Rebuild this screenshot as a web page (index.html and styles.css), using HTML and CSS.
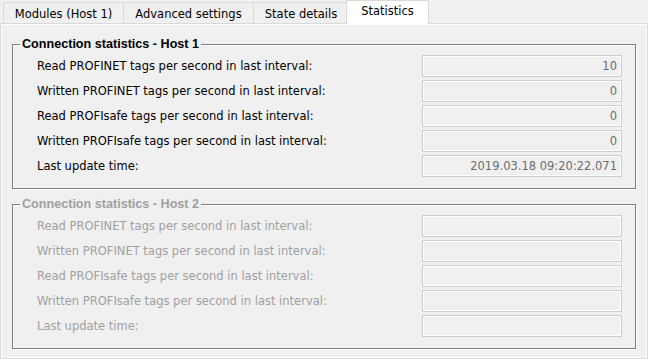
FILE: index.html
```html
<!DOCTYPE html>
<html>
<head>
<meta charset="utf-8">
<link rel="stylesheet" href="styles.css">
</head>
<body>
<div class="tabs">
  <div class="tab t1">Modules (Host 1)</div>
  <div class="tab t2">Advanced settings</div>
  <div class="tab t3">State details</div>
  <div class="tab active t4">Statistics</div>
</div>
<div class="panel">
  <div class="group">
    <span class="legend">Connection statistics - Host 1</span>
    <div class="rows">
      <div class="label">Read PROFINET tags per second in last interval:</div><div class="box">10</div>
      <div class="label">Written PROFINET tags per second in last interval:</div><div class="box">0</div>
      <div class="label">Read PROFIsafe tags per second in last interval:</div><div class="box">0</div>
      <div class="label">Written PROFIsafe tags per second in last interval:</div><div class="box">0</div>
      <div class="label">Last update time:</div><div class="box">2019.03.18 09:20:22.071</div>
    </div>
  </div>
  <div class="group disabled">
    <span class="legend">Connection statistics - Host 2</span>
    <div class="rows">
      <div class="label">Read PROFINET tags per second in last interval:</div><div class="box"></div>
      <div class="label">Written PROFINET tags per second in last interval:</div><div class="box"></div>
      <div class="label">Read PROFIsafe tags per second in last interval:</div><div class="box"></div>
      <div class="label">Written PROFIsafe tags per second in last interval:</div><div class="box"></div>
      <div class="label">Last update time:</div><div class="box"></div>
    </div>
  </div>
</div>
</body>
</html>
```
FILE: styles.css
```css
html, body {
  margin: 0;
  padding: 0;
  background: #f0f0f0;
  width: 648px;
  height: 359px;
  overflow: hidden;
  font-family: "DejaVu Sans", Verdana, sans-serif;
  font-size: 11.5px;
  color: #000;
}
.tabs {
  display: flex;
  height: 23px;
  padding-left: 3px;
  align-items: flex-end;
  position: relative;
  z-index: 2;
}
.tab {
  box-sizing: border-box;
  height: 21px;
  border: 1px solid #d9d9d9;
  border-bottom: none;
  margin-right: -1px;
  display: flex;
  align-items: center;
  justify-content: center;
  background: #f0f0f0;
  padding-top: 1px;
}
.t1 { width: 121px; }
.t2 { width: 131px; }
.t3 { width: 96px; }
.t4 { width: 81px; }
.tab.active {
  background: #fff;
  height: 24px;
  margin-left: -2px;
  margin-bottom: -1px;
  width: 83px;
  padding-top: 0;
  padding-bottom: 3px;
}
.panel {
  box-sizing: border-box;
  height: 336px;
  border: 1px solid #d9d9d9;
  box-shadow: inset 0 0 0 1px #fff;
  padding: 20px 11px 0 11px;
  display: flex;
  flex-direction: column;
  gap: 15px;
}
.group {
  position: relative;
  border: 1px solid #7f7f7f;
  box-shadow: 1px 1px 0 #fff, inset 1px 1px 0 #fff;
  padding: 10px 13px 11px 24px;
}
.legend {
  position: absolute;
  top: -8px;
  left: 7px;
  padding: 0 2px;
  background: #f0f0f0;
  font-family: "Liberation Sans", Arial, sans-serif;
  font-size: 12.6px;
  font-weight: bold;
  line-height: 15px;
}
.rows {
  display: grid;
  grid-template-columns: 1fr 200px;
  row-gap: 3px;
}
.label {
  height: 22px;
  line-height: 22px;
  white-space: nowrap;
}
.box {
  box-sizing: border-box;
  height: 22px;
  border: 1px solid #cccccc;
  box-shadow: inset 0 0 0 1px #fff;
  text-align: right;
  padding-right: 4px;
  line-height: 20px;
  color: #6d6d6d;
}
.disabled .legend,
.disabled .label {
  color: #a0a0a0;
}
```
